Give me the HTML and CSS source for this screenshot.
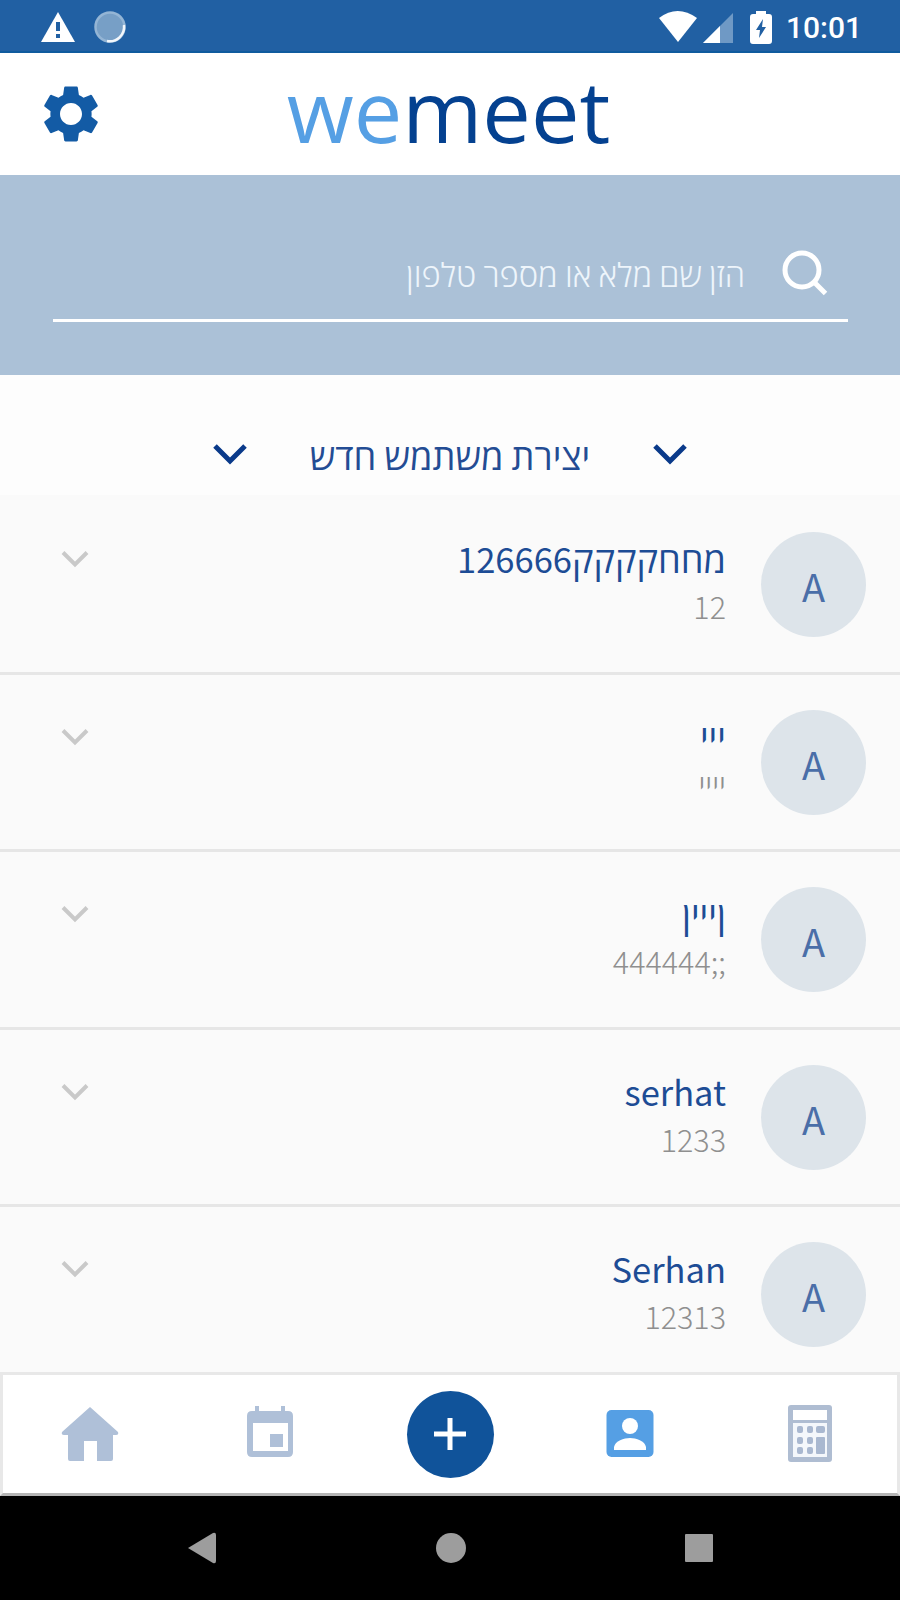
FILE: index.html
```html
<!DOCTYPE html>
<html lang="he">
  <head>
    <meta charset="UTF-8" />
    <meta name="viewport" content="width=device-width, initial-scale=1.0" />
    <title>wemeet</title>
    <link rel="stylesheet" href="styles.css">
  </head>
  <body>
    <div class="status-bar">
      <svg class="warning" width="36" height="32" viewBox="0 0 36 32">
        <path d="M18 1 L35 31 H1 Z" fill="#fff" />
        <path d="M16 11h4v9h-4z M16 23h4v4h-4z" fill="#2160a3" />
      </svg>
      <svg class="sync" width="34" height="34" viewBox="0 0 34 34">
        <circle cx="17" cy="17" r="14.500" fill="#779fc6" stroke="#94b5d5" stroke-width="2.500" />
        <path d="M31 15 A14.500 14.500 0 0 1 14 31" fill="none" stroke="#f3f7fb" stroke-width="2.500" />
      </svg>
      <div class="status-right">
        <svg class="wifi" width="40" height="33" viewBox="0 0 40 33">
          <path d="M1 8 Q19.500 -6 39 8 L20 32 Z" fill="#fff" />
        </svg>
        <svg class="signal" width="32" height="32" viewBox="0 0 32 32">
          <path d="M31 1 V31 H1 Z" fill="#6f99c5" />
          <path d="M18 14 V31 H1 Z" fill="#fff" />
        </svg>
        <svg class="battery" width="22" height="34" viewBox="0 0 22 34">
          <path d="M6 4V1h10v3h3q3 0 3 3v24q0 3-3 3H3q-3 0-3-3V7q0-3 3-3z" fill="#fff" />
          <path d="M13 9 L6 20 H10 L9 28 L16 17 H12 Z" fill="#2160a3" />
        </svg>
        <span class="time">10:01</span>
      </div>
    </div>

    <header class="header">
      <svg class="gear" width="66" height="66" viewBox="0 0 24 24">
        <path fill="#135ba5" d="M19.430 12.980c.040-.320.070-.640.070-.980s-.030-.660-.070-.980l2.110-1.650c.190-.150.240-.420.120-.640l-2-3.460c-.120-.220-.390-.300-.610-.220l-2.490 1c-.520-.400-1.080-.730-1.690-.980l-.380-2.650C14.460 2.180 14.250 2 14 2h-4c-.250 0-.460.180-.490.420l-.380 2.650c-.610.250-1.170.590-1.690.980l-2.490-1c-.230-.090-.490 0-.610.220l-2 3.460c-.130.220-.070.490.120.640l2.110 1.650c-.040.320-.070.650-.070.980s.030.660.070.980l-2.110 1.650c-.190.150-.240.420-.120.640l2 3.460c.120.220.390.300.610.220l2.490-1c.520.400 1.080.730 1.690.980l.380 2.650c.030.240.240.420.490.420h4c.250 0 .460-.180.490-.420l.380-2.650c.610-.250 1.170-.590 1.690-.980l2.490 1c.230.090.490 0 .610-.220l2-3.460c.120-.220.070-.490-.120-.640l-2.110-1.650zM12 16c-2.210 0-4-1.790-4-4s1.790-4 4-4 4 1.790 4 4-1.790 4-4 4z" />
      </svg>
      <h1 class="logo"><span>we</span>meet</h1>
    </header>

    <div class="search">
      <div class="search-box" dir="rtl">
        <svg width="46" height="46" viewBox="0 0 46 46" fill="none" stroke="#fff" stroke-width="5">
          <circle cx="20" cy="20" r="17" />
          <path d="M31.500 31.500 L43.500 43.500" />
        </svg>
        <span class="placeholder">הזן שם מלא או מספר טלפון</span>
      </div>
    </div>

    <div class="new-user" dir="rtl">
      <svg width="34" height="22" viewBox="0 0 34 22"><path d="M2 3 L17 18 L32 3" /></svg>
      <span class="new-user-text">יצירת משתמש חדש</span>
      <svg width="34" height="22" viewBox="0 0 34 22"><path d="M2 3 L17 18 L32 3" /></svg>
    </div>

    <main class="contacts">
      <div class="contact">
        <svg class="arrow" width="28" height="18" viewBox="0 0 28 18"><path d="M2 2.500 L14 14.500 L26 2.500" /></svg>
        <div class="info">
          <div class="name" dir="rtl"><span class="he">מחחקקקק</span>126666</div>
          <div class="phone">12</div>
        </div>
        <div class="avatar">A</div>
      </div>
      <div class="contact">
        <svg class="arrow" width="28" height="18" viewBox="0 0 28 18"><path d="M2 2.500 L14 14.500 L26 2.500" /></svg>
        <div class="info">
          <div class="name" dir="rtl"><span class="he">ייי</span></div>
          <div class="phone" dir="rtl">יייי</div>
        </div>
        <div class="avatar">A</div>
      </div>
      <div class="contact">
        <svg class="arrow" width="28" height="18" viewBox="0 0 28 18"><path d="M2 2.500 L14 14.500 L26 2.500" /></svg>
        <div class="info">
          <div class="name" dir="rtl"><span class="he">ןייין</span></div>
          <div class="phone">444444;;</div>
        </div>
        <div class="avatar">A</div>
      </div>
      <div class="contact">
        <svg class="arrow" width="28" height="18" viewBox="0 0 28 18"><path d="M2 2.500 L14 14.500 L26 2.500" /></svg>
        <div class="info">
          <div class="name">serhat</div>
          <div class="phone">1233</div>
        </div>
        <div class="avatar">A</div>
      </div>
      <div class="contact">
        <svg class="arrow" width="28" height="18" viewBox="0 0 28 18"><path d="M2 2.500 L14 14.500 L26 2.500" /></svg>
        <div class="info">
          <div class="name">Serhan</div>
          <div class="phone">12313</div>
        </div>
        <div class="avatar">A</div>
      </div>
    </main>

    <nav class="tabs">
      <div class="tab">
        <svg width="58" height="58" viewBox="0 0 58 58">
          <path d="M29 2 L57 27 Q58 30 55 30 H52 V54 Q52 56 50 56 H36 V36 H23 V56 H9 Q7 56 7 54 V30 H3 Q0 30 1 27 Z" fill="#afc0d8" />
        </svg>
      </div>
      <div class="tab">
        <svg width="48" height="58" viewBox="0 0 48 58">
          <path fill="#afc0d8" fill-rule="evenodd" d="M9 1h4v5h22V1h4v5h3q5 0 5 5v36q0 5-5 5H6q-5 0-5-5V11q0-5 5-5h3z M7 18v28h35V18z" />
          <path fill="#afc0d8" d="M24 29h13v13H24z" />
        </svg>
      </div>
      <div class="tab">
        <div class="add">
          <svg width="32" height="32" viewBox="0 0 32 32"><path d="M16 0V32M0 16H32" stroke="#fff" stroke-width="5" /></svg>
        </div>
      </div>
      <div class="tab">
        <svg width="48" height="58" viewBox="0 0 48 58">
          <rect x="0.500" y="5" width="47" height="47" rx="5" fill="#559fe4" />
          <circle cx="24" cy="21" r="8" fill="#fff" />
          <path d="M8 45 V42 C9 36 18 33 24 33 S39 36 40 42 V45 Z" fill="#fff" />
        </svg>
      </div>
      <div class="tab">
        <svg width="44" height="58" viewBox="0 0 44 58">
          <rect x="0" y="0" width="44" height="57" rx="3" fill="#afbdd2" />
          <rect x="5" y="5" width="34" height="10" fill="#fff" />
          <rect x="5" y="18" width="34" height="34" fill="#f4f7fb" />
          <g fill="#a9b8d0">
            <rect x="9" y="21" width="6" height="7" rx="2" />
            <rect x="19" y="21" width="6" height="7" rx="2" />
            <rect x="28" y="21" width="9" height="7" rx="2" />
            <rect x="9" y="32" width="6" height="7" rx="2" />
            <rect x="19" y="32" width="6" height="7" rx="2" />
            <rect x="9" y="42" width="6" height="7" rx="2" />
            <rect x="19" y="42" width="6" height="7" rx="2" />
            <rect x="28" y="32" width="9" height="17" rx="1" />
          </g>
        </svg>
      </div>
    </nav>

    <div class="system-nav">
      <svg width="28" height="32" viewBox="0 0 28 32"><path d="M0 16 L25 1 Q28 0 28 3 V29 Q28 32 25 31 Z" /></svg>
      <svg width="30" height="30" viewBox="0 0 30 30"><circle cx="15" cy="15" r="15" /></svg>
      <svg width="28" height="28" viewBox="0 0 28 28"><rect width="28" height="28" rx="1" /></svg>
    </div>
  </body>
</html>
```
FILE: styles.css
```css
* {
  box-sizing: border-box;
}
body {
  margin: 0;
  width: 900px;
  height: 1600px;
  display: flex;
  flex-direction: column;
  overflow: hidden;
  background-color: #fdfdfd;
  font-family: "Noto Sans CJK SC", "Open Sans", sans-serif;
}
svg {
  display: block;
  flex-shrink: 0;
}
.status-bar {
  height: 53px;
  flex-shrink: 0;
  display: flex;
  align-items: center;
  padding: 2px 38px 0 40px;
  background-color: #2160a3;
  border-bottom: 2px solid #0f5b9e;
}
.sync {
  margin-left: 17px;
}
.status-right {
  display: flex;
  align-items: center;
  margin-left: auto;
}
.signal {
  margin: 2px 0 0 4px;
}
.battery {
  margin: 0 14px 0 16px;
}
.time {
  padding-top: 3px;
  font-family: Roboto, sans-serif;
  font-size: 30px;
  font-weight: 500;
  line-height: 36px;
  color: #fff;
}
.header {
  height: 122px;
  flex-shrink: 0;
  display: grid;
  grid-template-columns: 66px 1fr 66px;
  align-items: center;
  padding: 0 38px;
  background-color: #fff;
}
.logo {
  margin: 0;
  padding: 0 3px 8px 0;
  text-align: center;
  font-family: "Open Sans", sans-serif;
  font-size: 86.500px;
  font-weight: 400;
  line-height: 100px;
  color: #044190;
}
.logo span {
  color: #559fe4;
}
.search {
  height: 200px;
  flex-shrink: 0;
  padding: 60px 52px 0 53px;
  background-color: #abc1d7;
}
.search-box {
  height: 87px;
  display: flex;
  align-items: center;
  padding: 0 20px 9px 0;
  border-bottom: 3px solid #fff;
}
.placeholder {
  margin-right: 37px;
  font-size: 32.700px;
  font-weight: 300;
  line-height: 40px;
  color: #eef5fb;
}
.new-user {
  height: 120px;
  flex-shrink: 0;
  display: flex;
  align-items: center;
  justify-content: center;
  gap: 63px;
  padding-top: 38px;
}
.new-user path {
  fill: none;
  stroke: #0a3a8a;
  stroke-width: 5;
}
.new-user-text {
  font-size: 36.200px;
  line-height: 44px;
  color: #234c94;
}
.contacts {
  flex: 1;
  min-height: 0;
  overflow: hidden;
  padding-top: 2px;
  background-color: #fafafa;
}
.contact {
  height: 177.500px;
  display: flex;
  align-items: flex-start;
  padding: 35px 34px 0 61px;
  border-bottom: 3px solid #e6e6e6;
}
.arrow {
  margin-top: 18px;
}
.arrow path {
  fill: none;
  stroke: #c9c9c9;
  stroke-width: 4;
}
.info {
  flex: 1;
  padding: 2px 35px 0 0;
  text-align: right;
}
.name {
  height: 48px;
  font-size: 34.500px;
  line-height: 48px;
  color: #1d4c95;
  text-align: right;
}
.he {
  font-size: 36.200px;
  line-height: 44px;
}
.phone {
  font-size: 30.500px;
  font-weight: 300;
  line-height: 48px;
  color: #8f8f8f;
  text-align: right;
}
.avatar {
  width: 105px;
  height: 105px;
  border-radius: 50%;
  background-color: #dde4ea;
  color: #4a6ea8;
  font-size: 38px;
  line-height: 107px;
  text-align: center;
}
.tabs {
  height: 124px;
  flex-shrink: 0;
  display: grid;
  grid-template-columns: repeat(5, 180px);
  justify-content: center;
  align-items: center;
  border: 3px solid #e8e8e8;
  border-bottom-color: #b5b5b5;
  background-color: #fff;
}
.tab {
  display: flex;
  justify-content: center;
}
.add {
  width: 87px;
  height: 87px;
  display: flex;
  align-items: center;
  justify-content: center;
  border-radius: 50%;
  background-color: #10539a;
}
.system-nav {
  height: 104px;
  flex-shrink: 0;
  display: flex;
  align-items: center;
  justify-content: space-between;
  padding: 0 187px 0 188px;
  background-color: #000;
  fill: #9d9d9d;
}
```
